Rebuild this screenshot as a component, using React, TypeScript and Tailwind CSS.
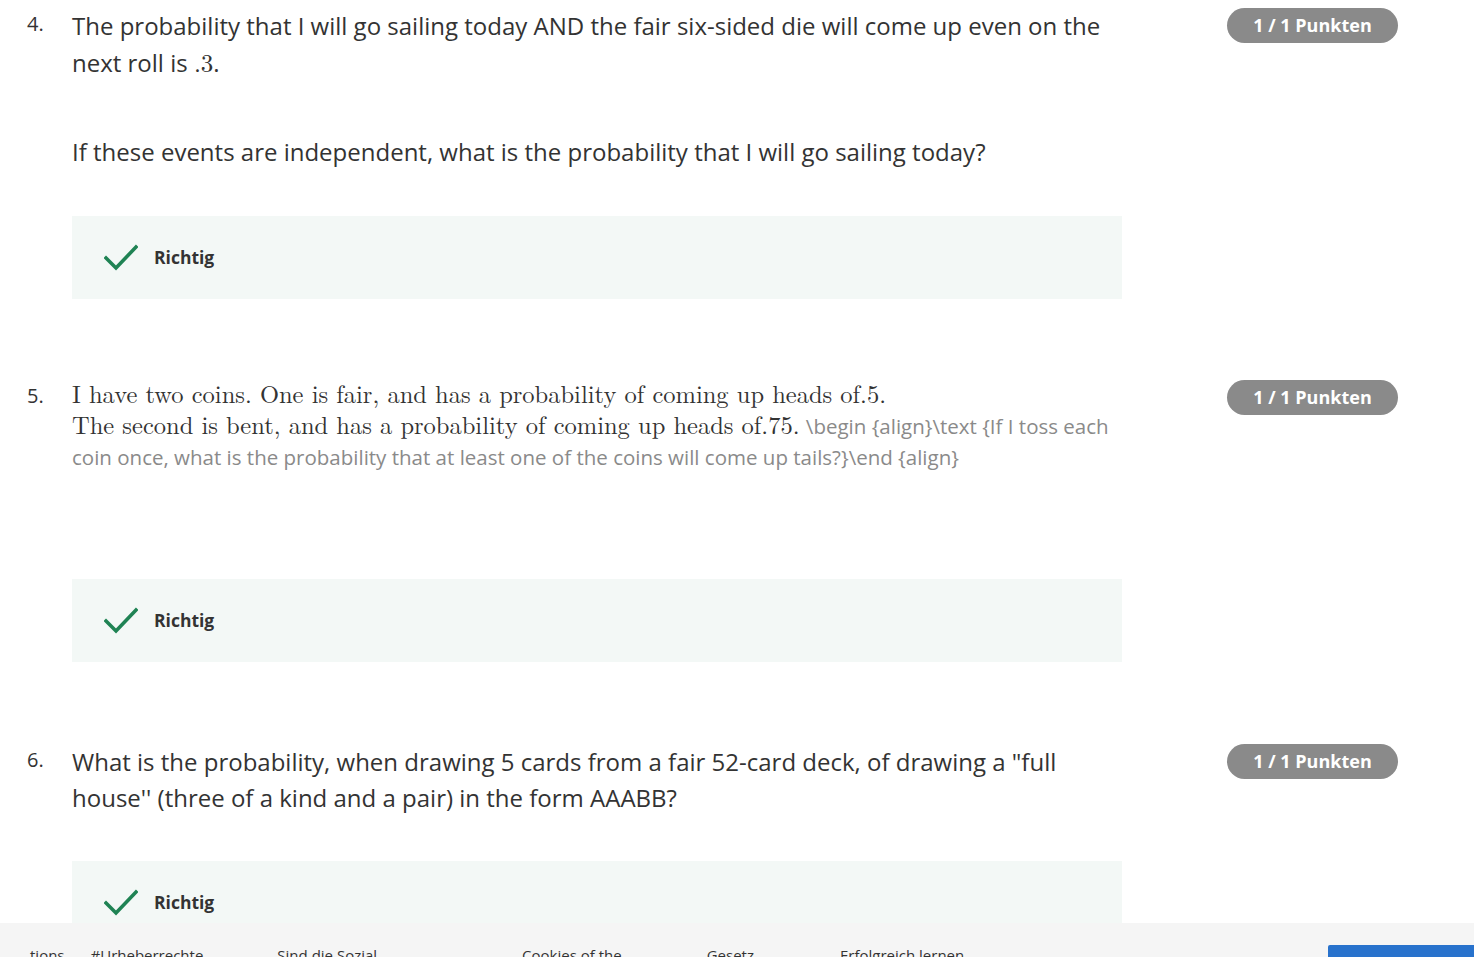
import type { ReactNode } from 'react'

const sans = { fontFamily: '"Open Sans", "Liberation Sans", sans-serif' }
const serif = { fontFamily: '"Latin Modern Roman", "DejaVu Serif", "Liberation Serif", serif' }

const Badge = () => (
  <div
    className="flex h-[35px] w-[171px] shrink-0 items-center justify-center rounded-full bg-[#8a8a8a] text-[18px] font-bold text-white"
    style={sans}
  >
    1 / 1 Punkten
  </div>
)

const Correct = () => (
  <div className="flex h-[83px] w-full items-center bg-[#f3f8f6] pl-[32px]">
    <svg width="34" height="28" viewBox="0 0 34 28" className="shrink-0">
      <polyline
        points="2,14 12,24 32,3"
        fill="none"
        stroke="#1f8354"
        strokeWidth="3.6"
        strokeLinecap="square"
      />
    </svg>
    <span className="ml-[16px] text-[17.5px] font-bold text-[#333333]" style={sans}>
      Richtig
    </span>
  </div>
)

interface QuestionProps {
  num: string
  children: ReactNode
}

const Question = ({ num, children }: QuestionProps) => (
  <div className="flex flex-row">
    <div className="w-[72px] shrink-0 pl-[27px] pt-[1px] text-[20px] leading-[30px] text-[#333333]" style={sans}>
      {num}
    </div>
    <div className="flex w-[1050px] shrink-0 flex-col">{children}</div>
    <div className="ml-[105px]">
      <Badge />
    </div>
  </div>
)

export default function App() {
  return (
    <div className="min-h-screen bg-white pt-[8px] text-[#333333]" style={sans}>
      {/* ------------- Question 4 ------------- */}
      <Question num="4.">
        <p className="text-[24px] leading-[36px]">
          The probability that I will go sailing today AND the fair six-sided die will come up even on the next roll
          is <span className="text-[25px]" style={serif}>.3</span>.
        </p>
        <p className="mt-[53px] text-[24px] leading-[36px]">
          If these events are independent, what is the probability that I will go sailing today?
        </p>
        <div className="mt-[46px]">
          <Correct />
        </div>
      </Question>

      {/* ------------- Question 5 ------------- */}
      <div className="mt-[81px]">
        <Question num="5.">
          <p className="-mt-[2px] text-[24.5px] leading-[30px]">
            <span style={serif}>I have two coins. One is fair, and has a probability of coming up heads of.5.</span>
            <br />
            <span style={serif}>The second is bent, and has a probability of coming up heads of.75.</span>{' '}
            <span className="text-[20.5px] text-[#8a8a8a]" style={sans}>
              \begin {'{align}'}\text {'{If I toss each coin once, what is the probability that at least one of the coins will come up tails?}'}\end {'{align}'}
            </span>
          </p>
          <div className="mt-[107px]">
            <Correct />
          </div>
        </Question>
      </div>

      {/* ------------- Question 6 ------------- */}
      <div className="mt-[82px] pb-[40px]">
        <Question num="6.">
          <p className="text-[24px] leading-[36px]">
            What is the probability, when drawing 5 cards from a fair 52-card deck, of drawing a "full house''
            (three of a kind and a pair) in the form AAABB?
          </p>
          <div className="mt-[45px]">
            <Correct />
          </div>
        </Question>
      </div>

      {/* ------------- Footer bar ------------- */}
      <div className="fixed inset-x-0 bottom-0 h-[34px] overflow-hidden bg-[#f5f5f5]">
        <div className="flex flex-row items-start pt-[22px] text-[15px] leading-[20px] text-[#333333]">
          <span className="ml-[30px]">tions</span>
          <span className="ml-[26px]">#Urheberrechte</span>
          <span className="ml-[74px]">Sind die Sozial</span>
          <span className="ml-[145px]">Cookies of the</span>
          <span className="ml-[85px]">Gesetz</span>
          <span className="ml-[86px]">Erfolgreich lernen</span>
          <div className="ml-auto h-[40px] w-[146px] rounded-tl-[2px] bg-[#2872cc]" />
        </div>
      </div>
    </div>
  )
}
